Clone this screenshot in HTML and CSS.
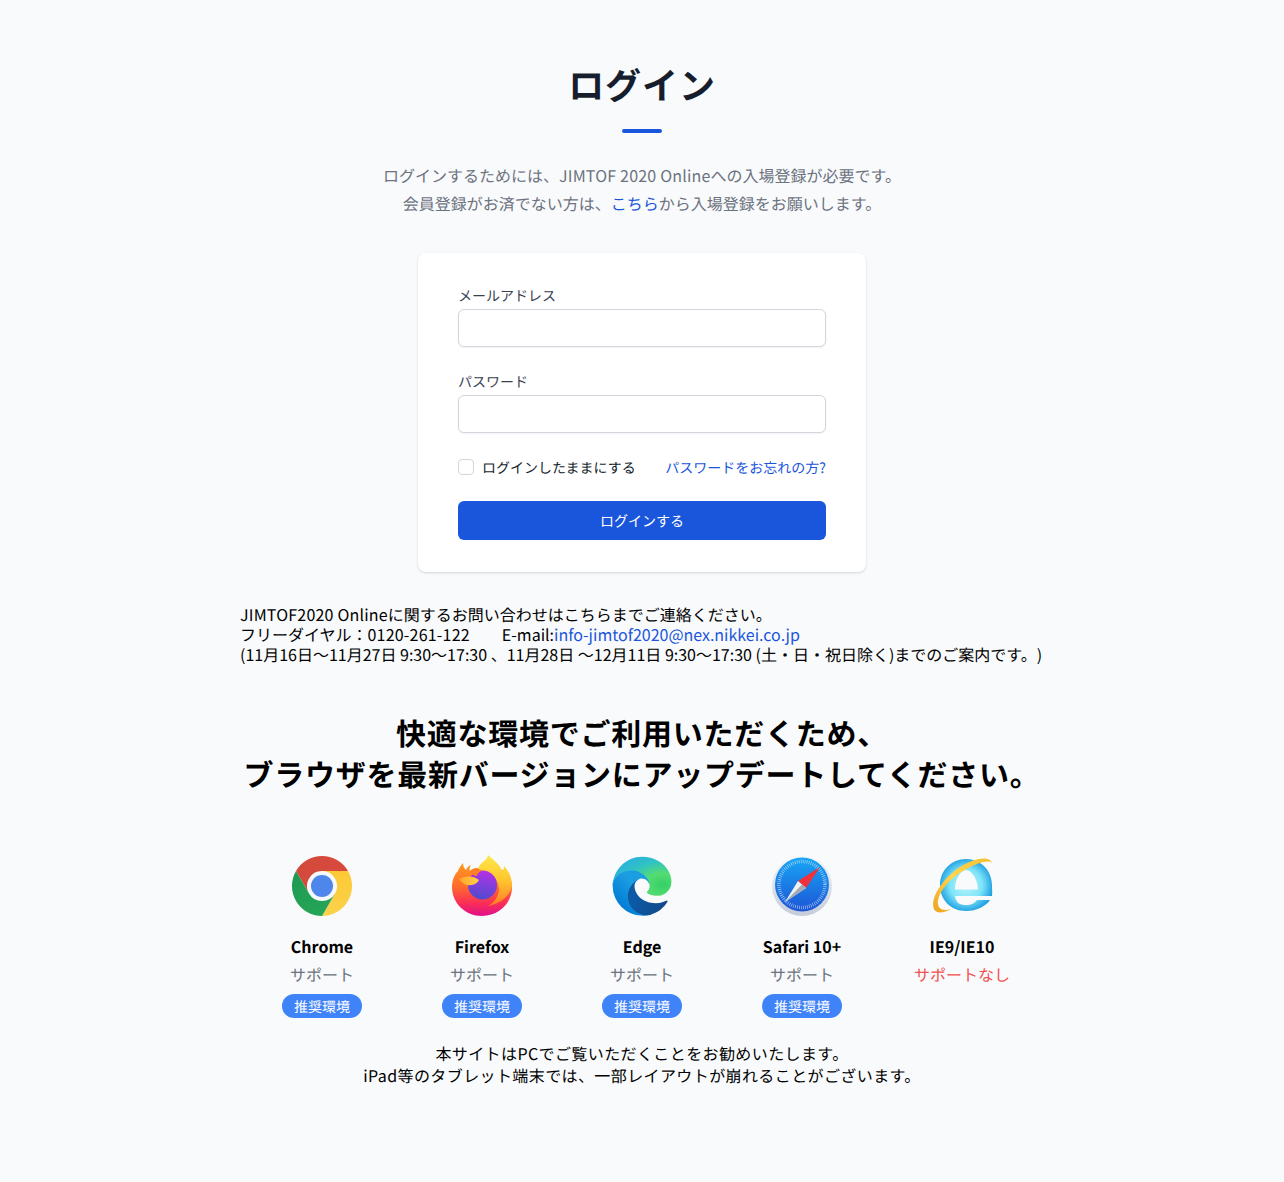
FILE: index.html
```html
<!DOCTYPE html>
<html lang="ja">
<head>
    <meta charset="UTF-8">
    <meta name="viewport" content="width=device-width, initial-scale=1.0">
    <title>ログイン</title>
    <link rel="stylesheet" href="styles.css">
</head>
<body>

    <main class="page">
        <h1 class="title">ログイン</h1>
        <div class="title-bar"></div>
        <p class="lead">
            ログインするためには、<span class="latin">JIMTOF 2020 Online</span>への入場登録が必要です。<br>
            会員登録がお済でない方は、<a href="#">こちら</a>から入場登録をお願いします。
        </p>

        <form class="card">
            <label class="field-label" for="email">メールアドレス</label>
            <input class="field-input" type="email" id="email">
            <label class="field-label field-label-second" for="password">パスワード</label>
            <input class="field-input" type="password" id="password">
            <div class="form-row">
                <label class="remember"><input class="checkbox" type="checkbox"><span>ログインしたままにする</span></label>
                <a class="forgot" href="#">パスワードをお忘れの方?</a>
            </div>
            <button class="submit" type="button">ログインする</button>
        </form>

        <div class="contact">
            <span class="latin">JIMTOF2020 Online</span>に関するお問い合わせはこちらまでご連絡ください。<br>
            フリーダイヤル：<span class="latin">0120-261-122</span><span class="contact-gap"></span>E-mail:<a href="#">info-jimtof2020@nex.nikkei.co.jp</a><br>
            (11月16日～11月27日 9:30～17:30 、11月28日 ～12月11日 9:30～17:30 (土・日・祝日除く)までのご案内です。)
        </div>

        <h2 class="update">快適な環境でご利用いただくため、<br>ブラウザを最新バージョンにアップデートしてください。</h2>

        <div class="browsers">
            <div class="browser">
                <svg class="browser-icon" viewBox="0 0 60 60">
                    <defs>
                        <linearGradient id="cr-r" x1="0" y1="0" x2="1" y2="0.2"><stop offset="0" stop-color="#d24a3c"/><stop offset="1" stop-color="#d8493c"/></linearGradient>
                        <linearGradient id="cr-y" x1="0.5" y1="0" x2="0.5" y2="1"><stop offset="0" stop-color="#fcc934"/><stop offset="1" stop-color="#fbd24e"/></linearGradient>
                        <linearGradient id="cr-g" x1="0" y1="0" x2="0.6" y2="1"><stop offset="0" stop-color="#1e9a50"/><stop offset="1" stop-color="#25a558"/></linearGradient>
                    </defs>
                    <path fill="url(#cr-r)" d="M4 15A30 30 0 0 1 56 15H30A15 15 0 0 0 17 37.5Z"/>
                    <path fill="url(#cr-y)" d="M56 15A30 30 0 0 1 30 60L43 37.5A15 15 0 0 0 30 15Z"/>
                    <path fill="url(#cr-g)" d="M30 60A30 30 0 0 1 4 15L17 37.5A15 15 0 0 0 43 37.5Z"/>
                    <circle cx="30" cy="30" r="13.5" fill="#f4f7fb"/>
                    <circle cx="30" cy="30" r="11" fill="#4e86ec"/>
                </svg>
                <div class="browser-name">Chrome</div>
                <div class="browser-support">サポート</div>
                <span class="badge">推奨環境</span>
            </div>

            <div class="browser">
                <svg class="browser-icon" viewBox="0 0 60 60">
                    <defs>
                        <linearGradient id="ff-body" x1="0.5" y1="0" x2="0.5" y2="1"><stop offset="0" stop-color="#ff9a1f"/><stop offset="0.45" stop-color="#ff6a2c"/><stop offset="0.75" stop-color="#fb2f55"/><stop offset="1" stop-color="#e0108c"/></linearGradient>
                        <linearGradient id="ff-flame" x1="0.5" y1="0" x2="0.5" y2="1"><stop offset="0" stop-color="#ffe94a"/><stop offset="0.5" stop-color="#ffc52e"/><stop offset="1" stop-color="#ff7a26"/></linearGradient>
                        <linearGradient id="ff-globe" x1="0.6" y1="0" x2="0.4" y2="1"><stop offset="0" stop-color="#b62fe6"/><stop offset="0.5" stop-color="#7f3fdb"/><stop offset="1" stop-color="#4f4bcb"/></linearGradient>
                        <linearGradient id="ff-head" x1="0" y1="0" x2="1" y2="0"><stop offset="0" stop-color="#ffa32a"/><stop offset="1" stop-color="#ffd24a"/></linearGradient>
                    </defs>
                    <path fill="url(#ff-body)" d="M0 31C0 47 13 60 30 60C47 60 60 47 60 31C60 22 55 14 44 12H24C22 12 20 13 18 15C17 13 18 11 19 9C16 10 15 12 14 14C12 12 11 10 11 7C9 9 7 12 6 15C2 19 0 25 0 31Z"/>
                    <path fill="url(#ff-flame)" d="M36-1C36 5 26 6 26 15C36 14 46 20 47 33C47 40 42 47 36 50C48 48 58 40 60 30C60 22 57 15 52 10C52 13 51 15 50 15C48 8 41 4 36-1Z"/>
                    <circle cx="30.500" cy="29" r="14.5" fill="url(#ff-globe)"/>
                    <path fill="#ff7d26" d="M18 15C21 12 26 12 30 14.500C27 16 25 18 25 20C22 20 19 18 18 15Z"/>
                    <path fill="url(#ff-head)" d="M7 23C12 20 21 19 27 24C25 28 21 29 19 29C14 30 10 27 7 23Z"/>
                </svg>
                <div class="browser-name">Firefox</div>
                <div class="browser-support">サポート</div>
                <span class="badge">推奨環境</span>
            </div>

            <div class="browser">
                <svg class="browser-icon" viewBox="0 0 256 256">
                    <defs>
                        <linearGradient id="ed-dark" x1="0.2" y1="0.6" x2="0.9" y2="0.75"><stop offset="0" stop-color="#0c59a4"/><stop offset="1" stop-color="#114a8b"/></linearGradient>
                        <linearGradient id="ed-mid" x1="0.6" y1="0.4" x2="0.15" y2="0.95"><stop offset="0" stop-color="#1b9de2"/><stop offset="0.2" stop-color="#1595df"/><stop offset="0.7" stop-color="#0680d7"/><stop offset="1" stop-color="#0078d4"/></linearGradient>
                        <radialGradient id="ed-top" cx="0.85" cy="0.72" r="0.85"><stop offset="0" stop-color="#35d066"/><stop offset="0.35" stop-color="#54dc72"/><stop offset="0.72" stop-color="#2fc2c6"/><stop offset="1" stop-color="#2bb4d8"/></radialGradient>
                    </defs>
                    <path fill="url(#ed-dark)" d="M231.07 190.54a93.73 93.73 0 0 1-10.54 4.71 101.87 101.87 0 0 1-35.9 6.46c-47.32 0-88.54-32.55-88.54-74.32A31.48 31.48 0 0 1 112.54 100c-42.8 1.8-53.8 46.4-53.8 72.53 0 73.88 68.09 81.37 82.76 81.37 7.91 0 19.84-2.3 27-4.56l1.31-.44a128.34 128.34 0 0 0 66.6-52.8 4 4 0 0 0-5.34-5.56z"/>
                    <path fill="url(#ed-mid)" d="M105.73 241.42a79.2 79.2 0 0 1-22.74-21.34A80.89 80.89 0 0 1 112.58 100c3.06-1.44 8.29-4.05 15.23-3.93a31.7 31.7 0 0 1 25.16 12.74 31.25 31.25 0 0 1 6.24 18.29c0-.21 23.94-77.9-78.31-77.9-42.97 0-78.31 40.78-78.31 76.56a127.4 127.4 0 0 0 11.85 54.81 128 128 0 0 0 156.38 67.11 75.55 75.55 0 0 1-64.1-6.26z"/>
                    <path fill="url(#ed-top)" d="M152.33 148.86c-.79 1.02-3.22 2.43-3.22 5.51 0 2.55 1.66 5 4.61 7.06 14.04 9.77 40.51 8.48 40.58 8.48a58.16 58.16 0 0 0 29.57-8.16A59.77 59.77 0 0 0 253.5 110.3c.25-21.88-7.81-36.43-11.07-42.88C221.75 26.97 177.12 3.72 128.66 3.72 60.48 3.72 5.07 58.48 4.09 126.66c.46-35.65 35.9-64.44 78.1-64.44 3.42 0 22.93.33 41.05 9.84 15.97 8.39 24.34 18.51 30.15 28.55 6.04 10.43 7.11 23.6 7.11 28.85 0 5.25-2.68 13.02-7.63 19.46z"/>
                </svg>
                <div class="browser-name">Edge</div>
                <div class="browser-support">サポート</div>
                <span class="badge">推奨環境</span>
            </div>

            <div class="browser">
                <svg class="browser-icon" viewBox="0 0 60 60">
                    <defs>
                        <linearGradient id="sf-blue" x1="0.5" y1="0" x2="0.5" y2="1"><stop offset="0" stop-color="#17a6f4"/><stop offset="1" stop-color="#1d55d6"/></linearGradient>
                        <linearGradient id="sf-rim" x1="0.5" y1="0" x2="0.5" y2="1"><stop offset="0" stop-color="#f4f5f8"/><stop offset="1" stop-color="#c5ccda"/></linearGradient>
                    </defs>
                    <circle cx="30" cy="30" r="30" fill="url(#sf-rim)"/>
                    <circle cx="30" cy="28.500" r="27" fill="url(#sf-blue)"/>
                    <circle cx="30" cy="28.500" r="23" fill="none" stroke="#e4effc" stroke-width="3.5" stroke-dasharray="0.6 1.41" opacity="0.8"/>
                    <path fill="#f0313c" d="M48 11L34 32L26 25Z"/>
                    <path fill="#f0f1f4" d="M13 46L26 25L34 32Z"/>
                    <path fill="#a4a9b4" d="M13 46L34 32L30 28.500Z"/>
                </svg>
                <div class="browser-name">Safari 10+</div>
                <div class="browser-support">サポート</div>
                <span class="badge">推奨環境</span>
            </div>

            <div class="browser">
                <svg class="browser-icon" viewBox="0 0 60 60">
                    <defs>
                        <radialGradient id="ie-e" cx="0.5" cy="0.5" r="0.52"><stop offset="0" stop-color="#bdf4fc"/><stop offset="0.6" stop-color="#7de4f8"/><stop offset="1" stop-color="#1f9fe2"/></radialGradient>
                        <linearGradient id="ie-ring" x1="1" y1="0" x2="0" y2="1"><stop offset="0" stop-color="#f5bf2e"/><stop offset="0.5" stop-color="#ffd550"/><stop offset="1" stop-color="#eda41c"/></linearGradient>
                    </defs>
                    <path fill="url(#ie-e)" fill-rule="evenodd" d="M60 40H23C24 47 28 49 34 49C39 49 43 47 45 44H58C54 50 45 55 34 55C19 55 8 44 8 29C8 15 19 3 34 3C49 3 60 15 60 29C60 33 60.500 37 60 40ZM23 33.500H46C46 24 40 14 34 14C28 14 23 24 23 33.500Z"/>
                    <path fill="url(#ie-ring)" d="M60 7C58 0 44 1 28 11C10 23-2 42 2 53C4 58 12 57 19 53C12 55 7 54 6 48C5 38 17 23 31 15C43 8 56 3 60 7Z"/>
                </svg>
                <div class="browser-name">IE9/IE10</div>
                <div class="browser-support browser-support-none">サポートなし</div>
            </div>
        </div>

        <p class="notice">本サイトはPCでご覧いただくことをお勧めいたします。<br>iPad等のタブレット端末では、一部レイアウトが崩れることがございます。</p>
    </main>

</body>
</html>
```

FILE: styles.css
```css
* {
    box-sizing: border-box;
}
body {
    margin: 0;
    background-color: #f9fafb;
    color: #000;
    font-family: "Noto Sans CJK JP", "Noto Sans", sans-serif;
    font-size: 16px;
    text-rendering: geometricPrecision;
    text-spacing-trim: space-all;
}
a {
    color: #1a56db;
    text-decoration: none;
}
.latin {
    letter-spacing: 0.2px;
}
.page {
    display: flex;
    flex-direction: column;
    align-items: center;
    padding: 64px 0 96px;
}
.title {
    margin: 0;
    font-size: 36px;
    line-height: 40px;
    font-weight: 700;
    letter-spacing: 0.025em;
    color: #161e2e;
    text-align: center;
}
.title-bar {
    width: 40px;
    height: 4px;
    margin-top: 25px;
    background-color: #1a56db;
    border-radius: 2px;
}
.lead {
    margin: 28px 0 0;
    color: #6b7280;
    line-height: 28px;
    text-align: center;
}
.card {
    width: 448px;
    margin-top: 36px;
    padding: 32px 40px;
    background-color: #fff;
    border-radius: 8px;
    box-shadow: 0 1px 3px rgba(0,0,0,0.1), 0 1px 2px rgba(0,0,0,0.06);
}
.field-label {
    display: block;
    font-size: 14px;
    line-height: 22px;
    color: #374151;
}
.field-label-second {
    margin-top: 24px;
}
.field-input {
    display: block;
    width: 100%;
    height: 38px;
    margin-top: 2px;
    padding: 8px 12px;
    border: 1px solid #d2d6dc;
    border-radius: 6px;
    background-color: #fff;
    box-shadow: 0 1px 2px rgba(0,0,0,0.05);
}
.form-row {
    display: flex;
    justify-content: space-between;
    align-items: flex-start;
    height: 20px;
    margin-top: 24px;
    font-size: 14px;
    line-height: 22px;
}
.remember {
    display: flex;
    align-items: flex-start;
    color: #161e2e;
}
.checkbox {
    appearance: none;
    width: 16px;
    height: 16px;
    margin: 2px 8px 0 0;
    background-color: #fff;
    border: 1px solid #d2d6dc;
    border-radius: 4px;
}
.submit {
    display: block;
    width: 100%;
    height: 39px;
    margin-top: 24px;
    padding: 0 0 2px;
    background-color: #1a56db;
    color: #fff;
    border: none;
    border-radius: 6px;
    font-family: inherit;
    font-size: 14px;
    cursor: pointer;
}
.contact {
    width: 804px;
    margin-top: 32px;
    line-height: 20px;
    color: #000;
    white-space: nowrap;
}
.contact-gap {
    display: inline-block;
    width: 32px;
}
.update {
    margin: 48px 0 0;
    font-size: 30px;
    line-height: 41px;
    font-weight: 700;
    letter-spacing: 0.025em;
    text-align: center;
}
.browsers {
    display: flex;
    margin-top: 62px;
    align-items: flex-start;
}
.browser {
    display: flex;
    flex-direction: column;
    align-items: center;
    width: 160px;
    height: 162px;
}
.browser-icon {
    display: block;
    width: 60px;
    height: 60px;
    overflow: visible;
}
.browser-name {
    margin-top: 18px;
    font-weight: 700;
    line-height: 24px;
}
.browser-support {
    margin-top: 4px;
    line-height: 24px;
    color: #6b7280;
}
.browser-support-none {
    color: #f05252;
}
.badge {
    width: 80px;
    height: 24px;
    margin-top: 8px;
    background-color: #3f83f8;
    color: #fff;
    border-radius: 12px;
    font-size: 14px;
    line-height: 26px;
    text-align: center;
}
.notice {
    margin: 24px 0 0;
    line-height: 22px;
    letter-spacing: 0.025em;
    text-align: center;
}
```
